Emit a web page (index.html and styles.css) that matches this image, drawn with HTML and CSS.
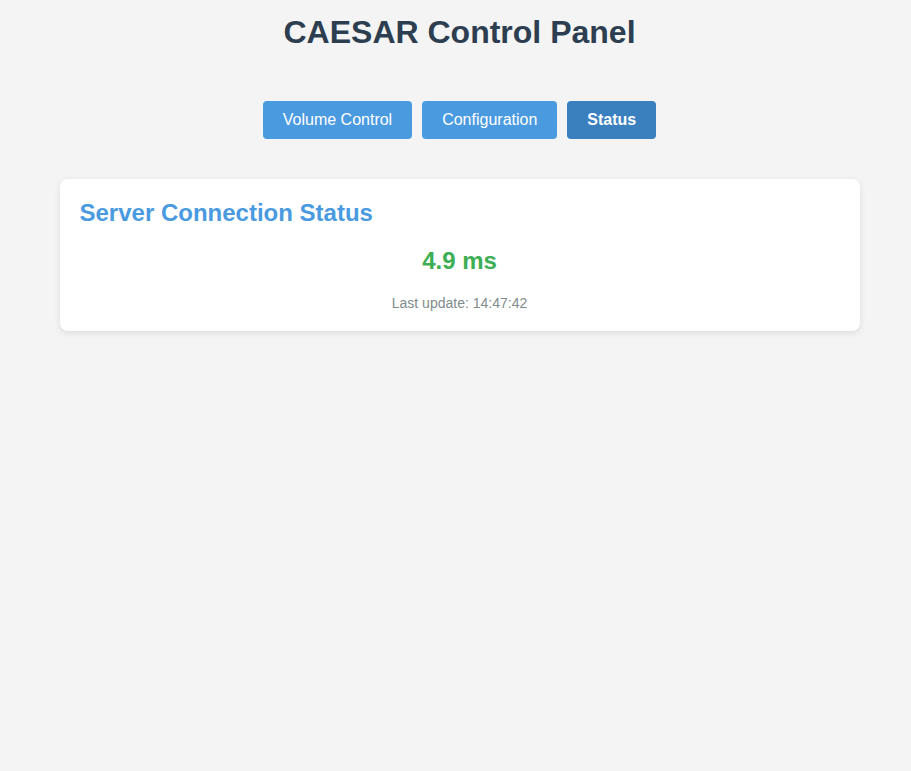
FILE: index.html
```html
<!DOCTYPE html>
<html lang="en">
<head>
<meta charset="utf-8">
<title>CAESAR Control Panel</title>
<link rel="stylesheet" href="styles.css">
</head>
<body>
<h1 class="title">CAESAR Control Panel</h1>
<nav class="tabs">
  <button class="tab">Volume Control</button>
  <button class="tab">Configuration</button>
  <button class="tab active">Status</button>
</nav>
<section class="card">
  <h2 class="card-title">Server Connection Status</h2>
  <div class="latency">4.9 ms</div>
  <div class="updated">Last update: 14:47:42</div>
</section>
</body>
</html>
```

FILE: styles.css
```css
html, body {
  margin: 0;
  padding: 0;
}
body {
  background: #f4f4f4;
  font-family: "Liberation Sans", Arial, sans-serif;
  padding: 14px 20px 20px 28px;
  min-height: 100vh;
  box-sizing: border-box;
}
.title {
  margin: 0;
  text-align: center;
  font-size: 32px;
  font-weight: bold;
  color: #2c3e50;
  line-height: 37px;
}
.tabs {
  display: flex;
  justify-content: center;
  gap: 10px;
  margin-top: 50px;
}
.tab {
  font-family: "Liberation Sans", Arial, sans-serif;
  font-size: 16px;
  line-height: 18px;
  padding: 10px 20px;
  border: none;
  border-radius: 4px;
  background: #4a9ae0;
  color: #ffffff;
  cursor: pointer;
}
.tab.active {
  background: #3a80bf;
  font-weight: bold;
}
.card {
  max-width: 760px;
  margin: 40px auto 0;
  background: #ffffff;
  border-radius: 8px;
  padding: 20px;
  box-shadow: 0 2px 6px rgba(0, 0, 0, 0.1);
}
.card-title {
  margin: 0;
  font-size: 24px;
  line-height: 28px;
  font-weight: bold;
  color: #4a9ae0;
}
.latency {
  margin-top: 20px;
  text-align: center;
  font-size: 24px;
  line-height: 28px;
  font-weight: bold;
  color: #3cae54;
}
.updated {
  margin-top: 20px;
  text-align: center;
  font-size: 14px;
  line-height: 16px;
  color: #7f8c8d;
}
```
